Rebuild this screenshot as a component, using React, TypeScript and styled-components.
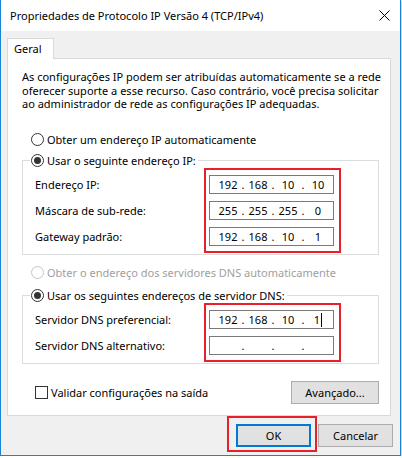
import React from 'react';
import styled, { createGlobalStyle } from 'styled-components';

const GlobalStyle = createGlobalStyle`
	html, body {
		margin: 0;
		padding: 0;
		background: #fff;
	}
	body {
		font-family: "Noto Sans", "DejaVu Sans", sans-serif;
		font-size: 11px;
		color: #000;
	}
	* {
		box-sizing: border-box;
	}
`;

const Window = styled.div`
	width: 401px;
	height: 456px;
	background: #f0f0f0;
	border: 1px solid #1883d7;
	border-top: none;
	box-shadow: 1px 1px 2px rgba(0, 0, 0, 0.25);
	display: flex;
	flex-direction: column;
`;

const TitleBar = styled.div`
	height: 31px;
	flex-shrink: 0;
	background: #fff;
	display: flex;
	align-items: center;
	justify-content: space-between;
	padding: 0 10px 0 9px;
`;

const Title = styled.span`
	font-size: 11px;
	color: #000;
`;

const Body = styled.div`
	padding: 7px 9px 0 6px;
	display: flex;
	flex-direction: column;
`;

const TabStrip = styled.div`
	height: 20px;
	display: flex;
`;

const Tab = styled.div`
	position: relative;
	z-index: 1;
	width: 47px;
	height: 21px;
	margin-bottom: -1px;
	padding-left: 6px;
	line-height: 19px;
	background: #fff;
	border: 1px solid #d9d9d9;
	border-bottom: none;
`;

const Panel = styled.div`
	height: 358px;
	background: #fff;
	border: 1px solid #d9d9d9;
	padding: 11px 11px 0 14px;
	display: flex;
	flex-direction: column;
`;

const Intro = styled.p`
	margin: 0;
	line-height: 13.5px;
	white-space: nowrap;
`;

const RadioRow = styled.label<{ $top: number; $disabled?: boolean }>`
	display: flex;
	align-items: center;
	gap: 3px;
	height: 16px;
	margin: ${(p) => p.$top}px 0 0 9px;
	color: ${(p) => (p.$disabled ? '#a0a0a0' : '#000')};
`;

const RadioCircle = styled.span<{ $checked?: boolean; $disabled?: boolean }>`
	position: relative;
	width: 13px;
	height: 13px;
	flex-shrink: 0;
	border-radius: 50%;
	background: #fff;
	border: 1px solid ${(p) => (p.$disabled ? '#c6c6c6' : '#333')};
	&::after {
		content: '';
		display: ${(p) => (p.$checked ? 'block' : 'none')};
		position: absolute;
		left: 2px;
		top: 2px;
		width: 7px;
		height: 7px;
		border-radius: 50%;
		background: #333;
	}
`;

const Group = styled.fieldset<{ $top: number }>`
	margin: ${(p) => p.$top}px 0 0 0;
	padding: 0;
	min-width: 0;
	border: 1px solid #dcdcdc;
`;

const Legend = styled.legend`
	display: flex;
	align-items: center;
	gap: 3px;
	height: 16px;
	margin-left: 7px;
	padding: 0 2px 0 1px;
`;

const GroupBody = styled.div`
	display: flex;
	justify-content: space-between;
	margin-top: -1px;
	padding: 0 37px 1px 12px;
`;

const Labels = styled.div`
	display: flex;
	flex-direction: column;
	gap: 7px;
	padding-top: 7px;
`;

const FieldLabel = styled.div`
	height: 19px;
	line-height: 19px;
`;

const Highlight = styled.div`
	display: flex;
	flex-direction: column;
	gap: 7px;
	border: 2px solid #e5222b;
	padding: 5px 5px 5px 3px;
`;

const IpField = styled.div`
	width: 125px;
	height: 19px;
	background: #fff;
	border: 1px solid #7a7a7a;
	padding-left: 6px;
	display: grid;
	grid-template-columns: 24px 6px 24px 6px 24px 6px 24px;
	align-items: center;
	line-height: 17px;
	text-align: center;
`;

const Caret = styled.span`
	display: inline-block;
	width: 1px;
	height: 14px;
	margin-left: 1px;
	vertical-align: -3px;
	background: #000;
`;

const BottomRow = styled.div`
	display: flex;
	align-items: center;
	justify-content: space-between;
	margin-top: 17px;
	padding-left: 13px;
`;

const CheckRow = styled.label`
	display: flex;
	align-items: center;
	gap: 3px;
`;

const CheckBox = styled.span`
	width: 13px;
	height: 13px;
	background: #fff;
	border: 1px solid #333;
`;

const Button = styled.button<{ $width?: number; $default?: boolean }>`
	width: ${(p) => p.$width ?? 75}px;
	height: 23px;
	padding: 0;
	font: inherit;
	color: #000;
	background: #e1e1e1;
	border: ${(p) => (p.$default ? '2px solid #0078d7' : '1px solid #adadad')};
`;

const Footer = styled.div`
	display: flex;
	justify-content: flex-end;
	align-items: flex-start;
	padding-right: 7px;
`;

const ButtonHighlight = styled.div`
	border: 2px solid #e5222b;
	padding: 6px 4px 3px 7px;
`;

const SideButton = styled(Button)`
	margin: 8px 0 0 1px;
`;

type IpProps = { value: string[]; caret?: boolean };

const IpInput: React.FC<IpProps> = ({ value, caret }) => (
	<IpField>
		{value.map((part, i) => (
			<React.Fragment key={i}>
				{i > 0 && <span>.</span>}
				<span>
					{part}
					{caret && i === value.length - 1 && <Caret />}
				</span>
			</React.Fragment>
		))}
	</IpField>
);

const CloseIcon = () => (
	<svg width="11" height="11" viewBox="0 0 11 11">
		<path d="M0.5 0.5 L10.5 10.5 M10.5 0.5 L0.5 10.5" stroke="#000" strokeWidth="1" fill="none" />
	</svg>
);

const App: React.FC = () => {
	return (
		<>
			<GlobalStyle />
			<Window>
				<TitleBar>
					<Title>Propriedades de Protocolo IP Versão 4 (TCP/IPv4)</Title>
					<CloseIcon />
				</TitleBar>
				<Body>
					<TabStrip>
						<Tab>Geral</Tab>
					</TabStrip>
					<Panel>
						<Intro>
							As configurações IP podem ser atribuídas automaticamente se a rede
							<br />
							oferecer suporte a esse recurso. Caso contrário, você precisa solicitar
							<br />
							ao administrador de rede as configurações IP adequadas.
						</Intro>

						<RadioRow $top={21}>
							<RadioCircle />
							Obter um endereço IP automaticamente
						</RadioRow>

						<Group $top={5}>
							<Legend>
								<RadioCircle $checked />
								Usar o seguinte endereço IP:
							</Legend>
							<GroupBody>
								<Labels>
									<FieldLabel>Endereço IP:</FieldLabel>
									<FieldLabel>Máscara de sub-rede:</FieldLabel>
									<FieldLabel>Gateway padrão:</FieldLabel>
								</Labels>
								<Highlight>
									<IpInput value={['192', '168', '10', '10']} />
									<IpInput value={['255', '255', '255', '0']} />
									<IpInput value={['192', '168', '10', '1']} />
								</Highlight>
							</GroupBody>
						</Group>

						<RadioRow $top={10} $disabled>
							<RadioCircle $disabled />
							Obter o endereço dos servidores DNS automaticamente
						</RadioRow>

						<Group $top={7}>
							<Legend>
								<RadioCircle $checked />
								Usar os seguintes endereços de servidor DNS:
							</Legend>
							<GroupBody>
								<Labels>
									<FieldLabel>Servidor DNS preferencial:</FieldLabel>
									<FieldLabel>Servidor DNS alternativo:</FieldLabel>
								</Labels>
								<Highlight>
									<IpInput value={['192', '168', '10', '1']} caret />
									<IpInput value={['', '', '', '']} />
								</Highlight>
							</GroupBody>
						</Group>

						<BottomRow>
							<CheckRow>
								<CheckBox />
								Validar configurações na saída
							</CheckRow>
							<Button $width={88}>Avançado...</Button>
						</BottomRow>
					</Panel>
				</Body>
				<Footer>
					<ButtonHighlight>
						<Button $default>OK</Button>
					</ButtonHighlight>
					<SideButton>Cancelar</SideButton>
				</Footer>
			</Window>
		</>
	);
};

export default App;
